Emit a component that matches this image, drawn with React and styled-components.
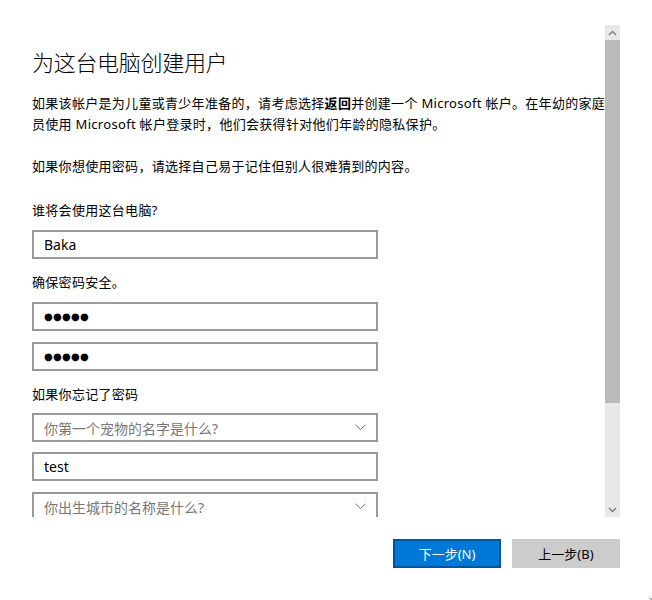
import React from "react";
import styled, { createGlobalStyle } from "styled-components";

const GlobalStyle = createGlobalStyle`
  html, body {
    margin: 0;
    padding: 0;
    background: #ffffff;
  }
  body {
    font-family: "Noto Sans", "Noto Sans CJK SC", sans-serif;
    color: #000;
  }
`;

const Window = styled.div`
  position: relative;
  width: 652px;
  height: 600px;
  background: #fff;
  display: flex;
  flex-direction: column;
  overflow: hidden;
`;

const ScrollRegion = styled.div`
  margin-top: 25px;
  width: 620px;
  height: 492px;
  display: flex;
`;

const Content = styled.div`
  flex: 1;
  overflow: hidden;
  padding: 20px 0 0 32px;
  white-space: nowrap;
`;

const Title = styled.h1`
  margin: 0 0 14px;
  font-size: 22px;
  line-height: 34px;
  font-weight: 300;
  letter-spacing: -0.3px;
`;

const Text = styled.p`
  margin: 0 0 ${(p) => p.$gap || 0}px;
  font-size: 13px;
  line-height: 21px;
  letter-spacing: 0.3px;
`;

const Strong = styled.b`
  font-weight: 700;
`;

const Field = styled.div`
  box-sizing: border-box;
  width: 346px;
  height: 29px;
  border: 2px solid #999999;
  margin-bottom: ${(p) => p.$gap || 0}px;
  padding: 0 10px;
  display: flex;
  align-items: center;
  justify-content: space-between;
  font-size: 14px;
  color: ${(p) => (p.$placeholder ? "#777777" : "#000")};
`;

const Dots = styled.span`
  font-size: 10px;
  letter-spacing: 0.3px;
  font-family: "DejaVu Sans", sans-serif;
`;

const Scrollbar = styled.div`
  width: 15px;
  display: flex;
  flex-direction: column;
  background: #e8e8e8;
`;

const ArrowBox = styled.div`
  height: 15px;
  display: flex;
  align-items: center;
  justify-content: center;
`;

const Thumb = styled.div`
  height: 363px;
  background: #bababa;
`;

const Track = styled.div`
  flex: 1;
`;

const Footer = styled.div`
  display: flex;
  justify-content: flex-end;
  gap: 11px;
  padding: 22px 32px 0 0;
`;

const Button = styled.button`
  box-sizing: border-box;
  width: 108px;
  height: 29px;
  font-family: "Noto Sans", "Noto Sans CJK SC", sans-serif;
  font-size: 13px;
  border: 2px solid ${(p) => (p.$primary ? "#00549a" : "#cccccc")};
  background: ${(p) => (p.$primary ? "#0078d7" : "#cccccc")};
  color: ${(p) => (p.$primary ? "#fff" : "#000")};
  padding: 0;
  cursor: default;
`;

const Grip = styled.svg`
  position: absolute;
  right: 0;
  bottom: 0;
`;

const Chevron = () => (
  <svg width="11" height="7" viewBox="0 0 11 7">
    <path d="M0.5 0.8 L5.5 5.6 L10.5 0.8" fill="none" stroke="#707070" strokeWidth="1" />
  </svg>
);

const Caret = ({ up }) => (
  <svg width="9" height="6" viewBox="0 0 9 6">
    <path
      d={up ? "M1 5 L4.5 1.5 L8 5" : "M1 1 L4.5 4.5 L8 1"}
      fill="none"
      stroke="#7a7a7a"
      strokeWidth="1.3"
    />
  </svg>
);

export default function App() {
  return (
    <Window>
      <GlobalStyle />
      <ScrollRegion>
        <Content>
          <Title>为这台电脑创建用户</Title>
          <Text>
            如果该帐户是为儿童或青少年准备的，请考虑选择<Strong>返回</Strong>并创建一个 Microsoft 帐户。在年幼的家庭成
          </Text>
          <Text $gap={21}>员使用 Microsoft 帐户登录时，他们会获得针对他们年龄的隐私保护。</Text>
          <Text $gap={23}>如果你想使用密码，请选择自己易于记住但别人很难猜到的内容。</Text>
          <Text $gap={9}>谁将会使用这台电脑?</Text>
          <Field $gap={13}>Baka</Field>
          <Text $gap={9}>确保密码安全。</Text>
          <Field $gap={11}>
            <Dots>●●●●●</Dots>
          </Field>
          <Field $gap={13}>
            <Dots>●●●●●</Dots>
          </Field>
          <Text $gap={8}>如果你忘记了密码</Text>
          <Field $gap={10} $placeholder>
            你第一个宠物的名字是什么?
            <Chevron />
          </Field>
          <Field $gap={11}>test</Field>
          <Field $placeholder>
            你出生城市的名称是什么?
            <Chevron />
          </Field>
        </Content>
        <Scrollbar>
          <ArrowBox>
            <Caret up />
          </ArrowBox>
          <Thumb />
          <Track />
          <ArrowBox>
            <Caret />
          </ArrowBox>
        </Scrollbar>
      </ScrollRegion>
      <Footer>
        <Button $primary>下一步(N)</Button>
        <Button>上一步(B)</Button>
      </Footer>
      <Grip width="4" height="4" viewBox="0 0 4 4">
        <rect x="2" y="2" width="2" height="2" fill="#b0b0b0" />
        <rect x="2" y="0" width="1" height="1" fill="#d0d0d0" />
        <rect x="0" y="2" width="1" height="1" fill="#d0d0d0" />
      </Grip>
    </Window>
  );
}
